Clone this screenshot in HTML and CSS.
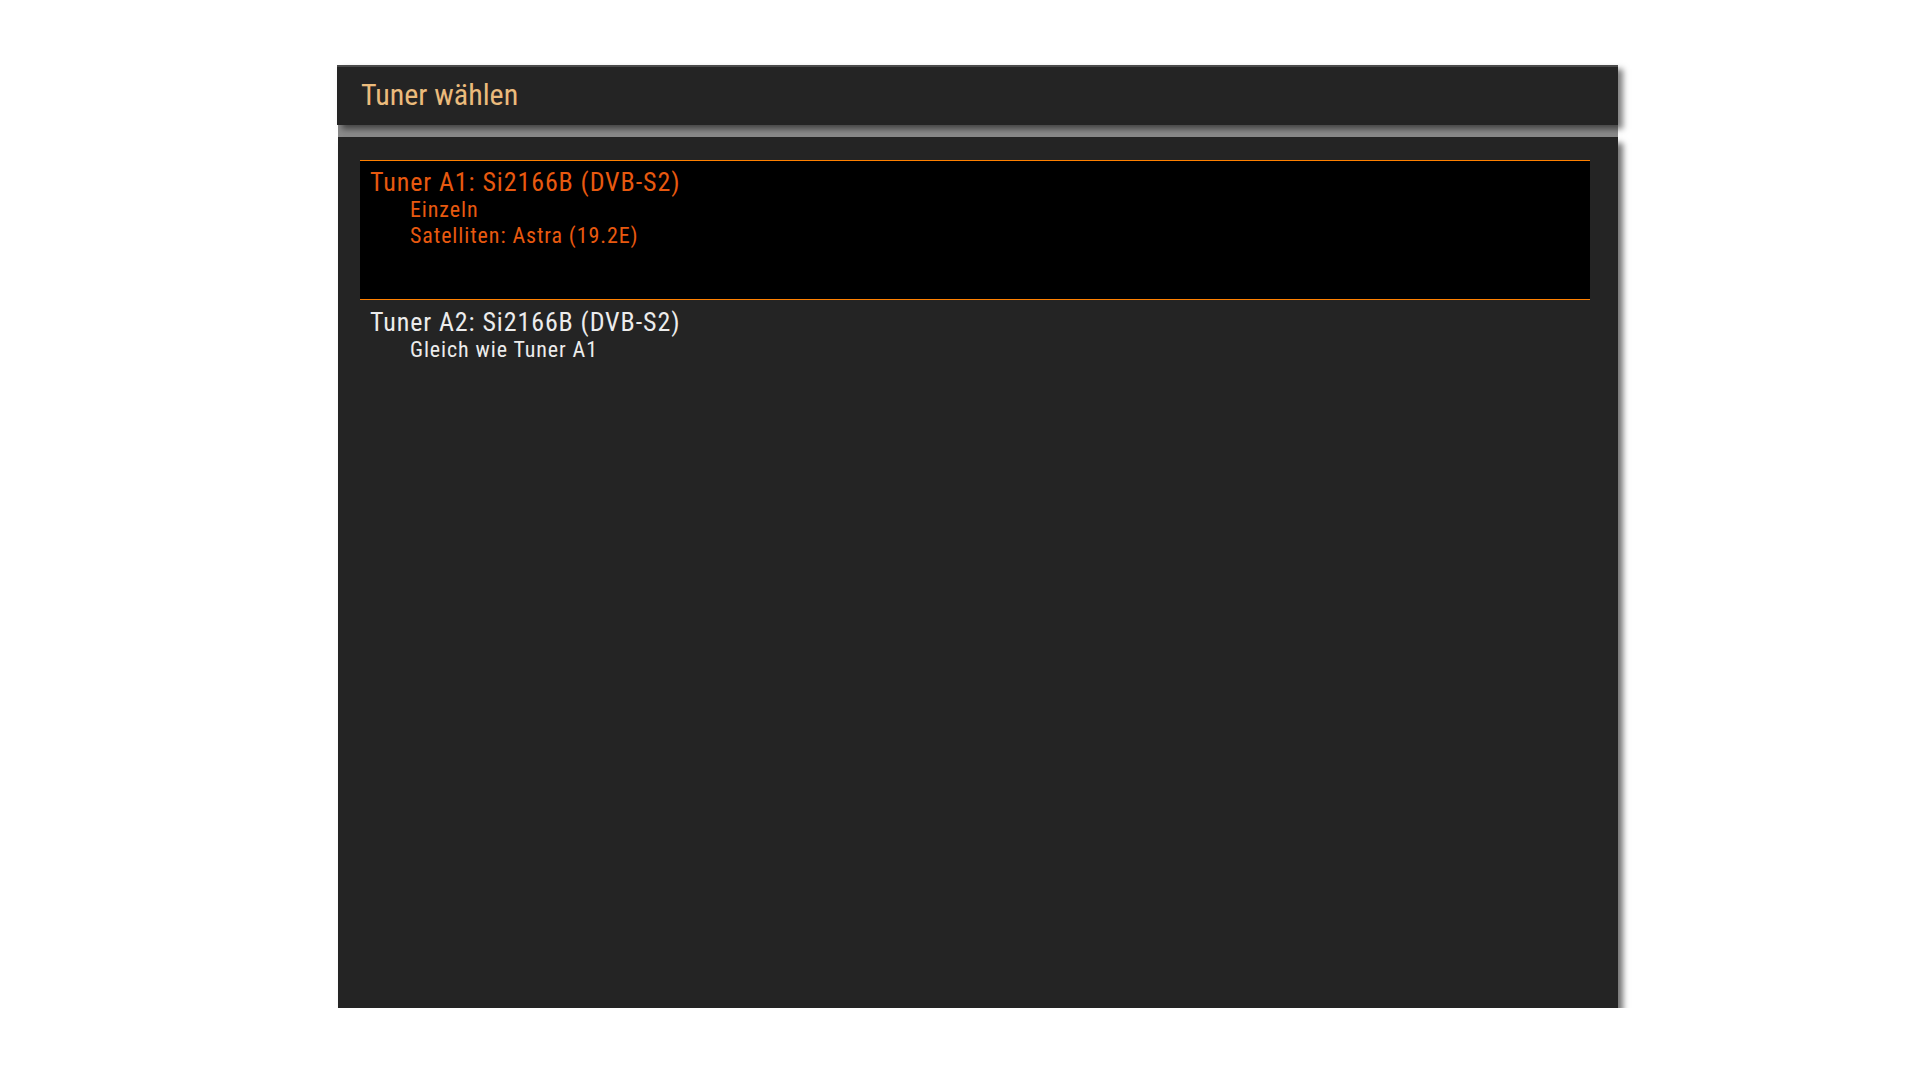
FILE: index.html
```html
<!DOCTYPE html>
<html lang="de">
<head>
    <meta charset="UTF-8">
    <title>Tuner wählen</title>
    <link rel="stylesheet" href="styles.css">
</head>
<body>
    <div class="screen">
        <div class="title-bar">
            <h1>Tuner wählen</h1>
        </div>
        <div class="title-gap"></div>
        <div class="window">
            <ul class="tuner-list">
                <li class="tuner selected">
                    <div class="tuner-name">Tuner A1: Si2166B (DVB-S2)</div>
                    <div class="tuner-info">Einzeln</div>
                    <div class="tuner-info">Satelliten: Astra (19.2E)</div>
                </li>
                <li class="tuner">
                    <div class="tuner-name">Tuner A2: Si2166B (DVB-S2)</div>
                    <div class="tuner-info">Gleich wie Tuner A1</div>
                </li>
            </ul>
        </div>
    </div>
</body>
</html>
```

FILE: styles.css
```css
* {
    box-sizing: border-box;
    margin: 0;
    padding: 0;
}

body {
    background-color: #fff;
    font-family: "Roboto Condensed", Roboto, sans-serif;
}

.screen {
    width: 1280px;
    margin-left: 338px;
    padding-top: 65px;
}

.title-bar {
    height: 60px;
    margin-left: -1px;
    background-color: #242424;
    border-top: 2px solid #4a4a4a;
    box-shadow: 5px 4px 6px rgba(0, 0, 0, 0.5);
    padding-left: 24px;
    position: relative;
}

.title-bar h1 {
    color: #ebbb7c;
    font-size: 30px;
    font-weight: normal;
    line-height: 56px;
}

.title-gap {
    height: 12px;
    background-color: #8a8a8a;
}

.window {
    height: 871px;
    background-color: #242424;
    box-shadow: 5px 6px 6px rgba(0, 0, 0, 0.55);
    padding: 23px 28px 0 22px;
}

.tuner-list {
    list-style: none;
}

.tuner {
    height: 140px;
    padding: 6px 10px 0;
    color: #ececec;
    border-top: 1px solid transparent;
    border-bottom: 1px solid transparent;
}

.tuner.selected {
    background-color: #000;
    color: #e8590f;
    border-color: #ff8000;
}

.tuner-name {
    font-size: 26px;
    line-height: 30px;
    letter-spacing: 0.9px;
}

.tuner-info {
    font-size: 22px;
    line-height: 26px;
    letter-spacing: 0.9px;
    padding-left: 40px;
}
```
